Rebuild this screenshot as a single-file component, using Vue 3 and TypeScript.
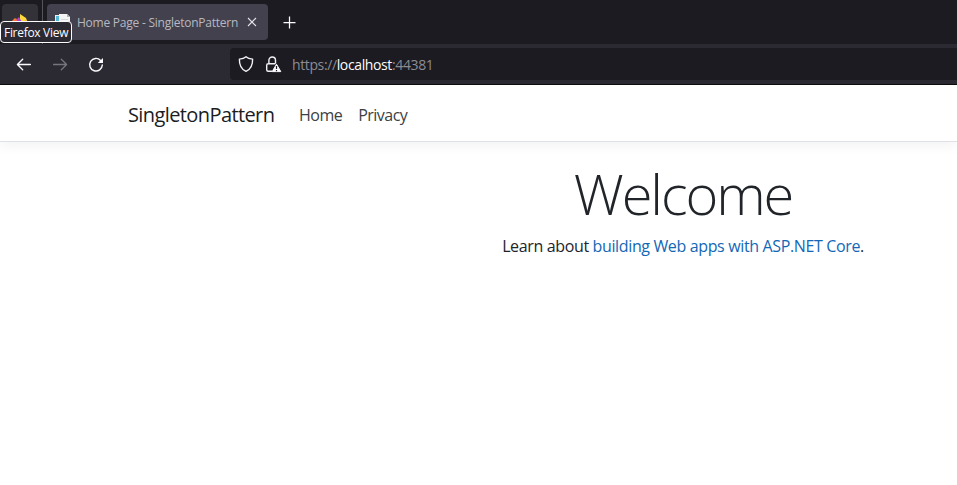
<script setup lang="ts">
import { ref } from 'vue'

const appName = 'SingletonPattern'
const tabTitle = ref(`Home Page - ${appName}`)
const url = { scheme: 'https://', host: 'localhost', port: ':44381' }
const links: string[] = ['Home', 'Privacy']
</script>

<template>
  <div class="window">
    <div class="tabstrip">
      <div class="view-button">
        <svg class="view-icon" width="16" height="16" viewBox="0 0 16 16">
          <path d="M0 7 3 4l2 4-2 7H1z" fill="#ff8a2a" />
          <path d="M4 6 7 3l3 4 2 2-3 6-5-4z" fill="#a33ee0" />
          <path d="M1 7 4 4l2 4-3 4z" fill="#ff6a3d" />
          <path d="M8 2.500V0l3 2 3 2 2 5-2 5-4-6-2-3z" fill="#ffd83a" />
          <path d="M11 8 14 6l2 3-3 5z" fill="#ff9d2c" />
        </svg>
        <div class="tooltip"><span>Firefox View</span></div>
      </div>
      <div class="divider"></div>
      <div class="tab">
        <svg class="favicon" width="16" height="16" viewBox="0 0 16 16">
          <path d="M0 1h9v14H0z" fill="#e9eef0" />
          <path d="M1 2h3v12H1z" fill="#54b9d9" />
          <path d="M4 0h8l3 3v12H4z" fill="#f5f5f5" />
          <path d="M12 0v3h3z" fill="#a9b4bb" />
          <path d="M6 5.500h7" stroke="#d5dade" />
        </svg>
        <span class="tab-title">{{ tabTitle }}</span>
        <svg class="close" width="10" height="10" viewBox="0 0 10 10">
          <path d="M1 1l8 8M9 1 1 9" stroke="#e4e3ea" stroke-width="1.1" />
        </svg>
      </div>
      <svg class="plus" width="13" height="13" viewBox="0 0 13 13">
        <path d="M6.5 .5v12M.5 6.5h12" stroke="#fbfbfe" stroke-width="1.25" />
      </svg>
    </div>

    <div class="toolbar">
      <div class="nav-buttons">
        <svg width="16" height="16" viewBox="0 0 16 16" fill="none" stroke="#fbfbfe" stroke-width="1.3" stroke-linecap="round" stroke-linejoin="round">
          <path d="M14.4 8.500H1.500M6.700 3.200 1.400 8.500l5.300 5.300" />
        </svg>
        <svg width="16" height="16" viewBox="0 0 16 16" fill="none" stroke="#76757d" stroke-width="1.3" stroke-linecap="round" stroke-linejoin="round">
          <path d="M1.600 8.500h12.900M9.300 3.200 14.600 8.500l-5.300 5.300" />
        </svg>
        <svg width="16" height="17" viewBox="0 0 16 17" fill="none">
          <path d="M12.600 4.400A6.300 6.300 0 1 0 14.300 9" stroke="#fbfbfe" stroke-width="1.4" stroke-linecap="round" />
          <path d="M15 2v5H9.800z" fill="#fbfbfe" />
        </svg>
      </div>
      <div class="urlbar">
        <svg class="shield" width="16" height="18" viewBox="0 0 16 18" fill="none">
          <path d="M8 1.700C9.500 3 12 3.800 14.600 4.100c.2 5.400-1.800 10.100-6.600 12.300C3.200 14.200 1.200 9.500 1.400 4.100 4 3.800 6.500 3 8 1.700z" stroke="#f2f2f5" stroke-width="1.4" stroke-linejoin="round" />
        </svg>
        <svg class="lock" width="17" height="17" viewBox="0 0 17 17" fill="none">
          <path d="M7 15.300H3.200c-.9 0-1.500-.6-1.500-1.500V9.200c0-.9.6-1.500 1.500-1.500h7M3.900 7.500V4.300a3.300 3.300 0 0 1 6.600 0v3.500" stroke="#f2f2f5" stroke-width="1.4" />
          <path d="M11.500 8.200 15.800 15.600H7.200z" fill="#fbfbfe" stroke="#fbfbfe" stroke-linejoin="round" />
          <path d="M11.500 10v3M11.500 14v1.300" stroke="#1c1b22" stroke-width="1.200" />
        </svg>
        <div class="url">{{ url.scheme }}<span class="host">{{ url.host }}</span>{{ url.port }}</div>
      </div>
    </div>

    <header class="navbar">
      <a class="brand">{{ appName }}</a>
      <nav class="links">
        <a v-for="link in links" :key="link" class="link">{{ link }}</a>
      </nav>
    </header>

    <main class="content">
      <h1>Welcome</h1>
      <p>Learn about <a class="docs">building Web apps with ASP.NET Core</a>.</p>
    </main>
  </div>
</template>

<style>
body {
  background: #fff;
  overflow: hidden;
}
</style>

<style scoped>
.window {
  height: 485px;
  overflow: hidden;
  background: #fff;
  font-family: 'Open Sans', 'Noto Sans', sans-serif;
  white-space: nowrap;
}
svg {
  display: block;
  flex: none;
}
.tabstrip {
  display: flex;
  align-items: center;
  height: 44px;
  box-sizing: border-box;
  padding-left: 2px;
  background: #1c1b22;
}
.view-button {
  position: relative;
  display: flex;
  justify-content: center;
  align-items: center;
  width: 36px;
  height: 36px;
  border-radius: 4px;
  background: #333238;
}
.tooltip {
  position: absolute;
  z-index: 2;
  left: -2px;
  top: 17px;
  width: 72px;
  height: 22px;
  box-sizing: border-box;
  border: 1px solid #fbfbfe;
  border-radius: 4px;
  background: #2b2a33;
  color: #fbfbfe;
  font-size: 12px;
  line-height: 22px;
  padding-left: 3px;
  letter-spacing: -0.3px;
}
.divider {
  width: 1px;
  height: 44px;
  margin: 0 4px;
  background: #55545c;
}
.tab {
  display: flex;
  align-items: center;
  width: 221px;
  height: 36px;
  box-sizing: border-box;
  padding: 0 11px 0 8px;
  border-radius: 4px;
  background: #42414d;
}
.tab-title {
  flex: 1;
  min-width: 0;
  margin-left: 6px;
  padding-top: 1px;
  font-size: 12px;
  line-height: 18px;
  letter-spacing: -0.24px;
  color: #b9b8c0;
}
.plus {
  margin-left: 15px;
}
.toolbar {
  display: flex;
  align-items: center;
  height: 41px;
  box-sizing: border-box;
  border-bottom: 1px solid #0c0c0d;
  background: #2b2a33;
}
.nav-buttons {
  display: flex;
  align-items: flex-start;
  gap: 20px;
  width: 214px;
  padding-left: 16px;
}
.urlbar {
  flex: 1;
  display: flex;
  align-items: center;
  height: 32px;
  border-radius: 4px 0 0 4px;
  background: #1c1b22;
}
.shield {
  margin-left: 8px;
}
.lock {
  margin-left: 11px;
}
.url {
  margin-left: 10px;
  margin-top: 2px;
  font-size: 14px;
  line-height: 20px;
  letter-spacing: -0.38px;
  color: #8c8b93;
}
.host {
  color: #fbfbfe;
}
.navbar {
  display: flex;
  align-items: center;
  height: 57px;
  box-sizing: border-box;
  padding: 4px 0 0 128px;
  border-bottom: 1px solid #dee2e6;
  box-shadow: 0 4px 12px rgba(0, 0, 0, 0.05);
}
.brand {
  width: 163px;
  font-size: 20px;
  line-height: 30px;
  letter-spacing: -0.6px;
  color: #1b1d1f;
}
.links {
  display: flex;
  padding-bottom: 1px;
}
.link {
  padding: 0 8px;
  font-size: 16px;
  line-height: 24px;
  letter-spacing: -0.52px;
  color: #3c4043;
}
.content {
  width: 1110px;
  margin-left: 128px;
  padding-top: 18px;
  text-align: center;
  color: #212529;
}
h1 {
  margin: 0;
  font-size: 56px;
  line-height: 67px;
  font-weight: 300;
  letter-spacing: -2.1px;
}
p {
  margin: 7px 0 0;
  font-size: 16px;
  line-height: 24px;
  letter-spacing: -0.36px;
}
.docs {
  color: #1267b7;
}
</style>
